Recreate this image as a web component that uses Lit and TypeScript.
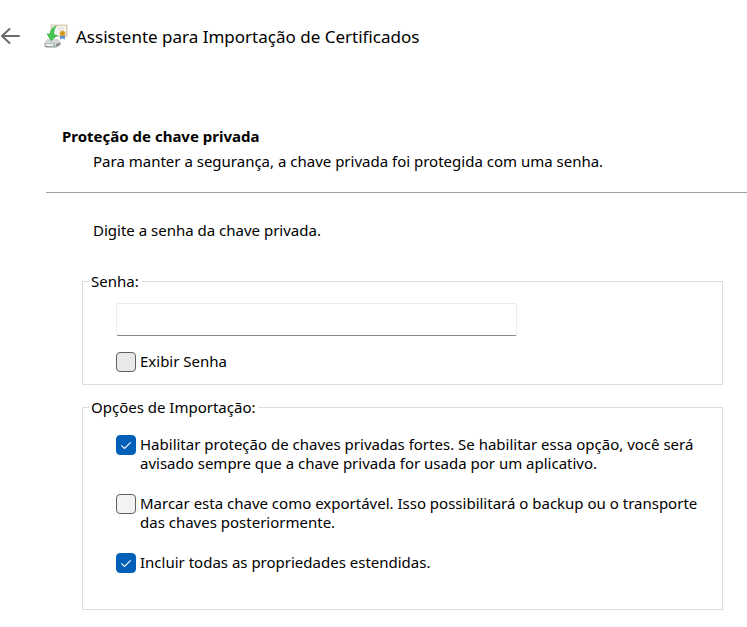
import { LitElement, html, css, svg } from "lit";
import { customElement, property, state } from "lit/decorators.js";

const backArrow = svg`<path d="M19 9H2M9.500 2L2 9l7.500 7" fill="none" stroke="#6b6b6b" stroke-width="2" stroke-linecap="round" stroke-linejoin="round"/>`;

@customElement("wizard-icon")
class WizardIcon extends LitElement {
  static styles = css`
    :host {
      display: block;
      width: 24px;
      height: 24px;
    }
    .icon {
      display: block;
      width: 100%;
      height: 100%;
    }
  `;

  render() {
    return html`<svg class="icon" viewBox="0 0 24 24" aria-hidden="true">
      <rect x="6.500" y="0.500" width="17" height="12.500" fill="#d9cfb8" />
      <rect x="8" y="2" width="14" height="9.500" fill="#f8f7f3" />
      <path d="M13 4h7M15 6h5" stroke="#cdd0d4" stroke-width="0.800" />
      <path d="M16.500 10l-.5 5.500 2.500-1.200 2.500 1.200-.5-5.500z" fill="#4a8ee0" />
      <circle cx="18.500" cy="9.500" r="2.800" fill="#e0a224" />
      <circle cx="18.500" cy="9.500" r="1.100" fill="#c07c12" />
      <path d="M4 15h9.500l3 3.500v2.500L12 23.500H2L0.500 22v-3z" fill="#8d9194" />
      <path d="M4 15h9.500l3 3.500-4.500 1.200L0.800 19z" fill="#d3d5d7" />
      <path d="M1 19.600l10.800.4v2.400L2 22z" fill="#eceeef" />
      <path d="M9 21.300h2" stroke="#49a84a" stroke-width="1" />
      <path d="M12.500 2C8.500 3 6.300 6 6 10L3 9.800l4 7 6.500-5.500-3.300-.6C9.500 7.500 10.300 4.500 12.500 2z" fill="#43c552" stroke="#2fa640" stroke-width="0.500" />
    </svg>`;
  }
}

@customElement("check-option")
class CheckOption extends LitElement {
  @property() label = "";
  @property({ type: Boolean }) checked = false;
  @property({ type: Boolean, reflect: true }) hovered = false;

  static styles = css`
    :host {
      display: block;
    }
    .option {
      display: grid;
      grid-template-columns: 20px 1fr;
      gap: 4px;
      align-items: start;
      line-height: 19px;
    }
    .box {
      appearance: none;
      box-sizing: border-box;
      width: 20px;
      height: 20px;
      margin: 0;
      border: 1px solid #626262;
      border-radius: 4px;
      background: #f3f3f3;
    }
    :host([hovered]) .box {
      background: #e9e9e9;
    }
    .box:checked {
      border-color: #005fb8;
      background: #005fb8;
    }
    .control {
      display: grid;
    }
    .control > * {
      grid-area: 1 / 1;
    }
    .tick {
      width: 20px;
      height: 20px;
      pointer-events: none;
    }
  `;

  private toggle(e: Event) {
    this.checked = (e.target as HTMLInputElement).checked;
    this.dispatchEvent(new Event("change"));
  }

  render() {
    return html`<label class="option">
      <span class="control">
        <input class="box" type="checkbox" .checked=${this.checked} @change=${this.toggle} />
        ${this.checked
          ? html`<svg class="tick" viewBox="0 0 20 20" aria-hidden="true">
              <path d="M5.300 10.300l3.200 3.200 6.200-6.200" fill="none" stroke="#fff" stroke-width="1.100" />
            </svg>`
          : null}
      </span>
      <span>${this.label}</span>
    </label>`;
  }
}

@customElement("app-root")
class AppRoot extends LitElement {
  @state() private showPassword = false;

  static styles = css`
    :host {
      display: block;
      background: #fff;
      color: #000;
      font: 15px/20px "Noto Sans", "Open Sans", sans-serif;
    }
    .header {
      display: flex;
      align-items: flex-start;
      padding-top: 24px;
    }
    .back {
      width: 20px;
      height: 24px;
      margin-right: 24px;
      padding: 0;
      border: 0;
      background: none;
    }
    .arrow {
      display: block;
    }
    .title {
      margin: 0 0 0 8px;
      font-size: 17px;
      font-weight: 400;
      line-height: 26px;
    }
    .intro {
      margin-left: 46px;
      padding: 76px 16px 21px;
      border-bottom: 1px solid #a0a0a0;
    }
    .heading {
      margin: 0;
      font-size: 15px;
      font-weight: 700;
      line-height: 20px;
    }
    .subtitle {
      margin: 5px 0 0 31px;
    }
    .form {
      padding: 27px 24px 16px 82px;
    }
    .prompt {
      margin: 0 0 31px 11px;
    }
    .group {
      min-width: 0;
      margin: 0 0 12px;
      padding: 12px 16px 12px 33px;
      border: 1px solid #dcdcdc;
    }
    .legend {
      margin-left: -27px;
      padding: 0 2px;
    }
    .password {
      box-sizing: border-box;
      display: block;
      width: 100%;
      max-width: 401px;
      height: 33px;
      margin-bottom: 16px;
      padding: 4px 8px;
      border: 1px solid #ececec;
      border-bottom-color: #868686;
      border-radius: 2px;
      font: inherit;
      outline: none;
    }
    .options {
      display: grid;
      gap: 21px;
      padding: 6px 0 24px;
    }
  `;

  render() {
    return html`
      <header class="header">
        <button class="back" aria-label="Voltar">
          <svg class="arrow" width="20" height="18" viewBox="0 0 20 18">${backArrow}</svg>
        </button>
        <wizard-icon></wizard-icon>
        <h1 class="title">Assistente para Importação de Certificados</h1>
      </header>
      <main>
        <section class="intro">
          <h2 class="heading">Proteção de chave privada</h2>
          <p class="subtitle">Para manter a segurança, a chave privada foi protegida com uma senha.</p>
        </section>
        <form class="form">
          <p class="prompt">Digite a senha da chave privada.</p>
          <fieldset class="group">
            <legend class="legend"><label for="password">Senha:</label></legend>
            <input id="password" class="password" type=${this.showPassword ? "text" : "password"} autocomplete="off" />
            <check-option
              hovered
              label="Exibir Senha"
              @change=${() => (this.showPassword = !this.showPassword)}
            ></check-option>
          </fieldset>
          <fieldset class="group">
            <legend class="legend">Opções de Importação:</legend>
            <div class="options">
              <check-option
                checked
                label="Habilitar proteção de chaves privadas fortes. Se habilitar essa opção, você será avisado sempre que a chave privada for usada por um aplicativo."
              ></check-option>
              <check-option
                label="Marcar esta chave como exportável. Isso possibilitará o backup ou o transporte das chaves posteriormente."
              ></check-option>
              <check-option checked label="Incluir todas as propriedades estendidas."></check-option>
            </div>
          </fieldset>
        </form>
      </main>
    `;
  }
}
